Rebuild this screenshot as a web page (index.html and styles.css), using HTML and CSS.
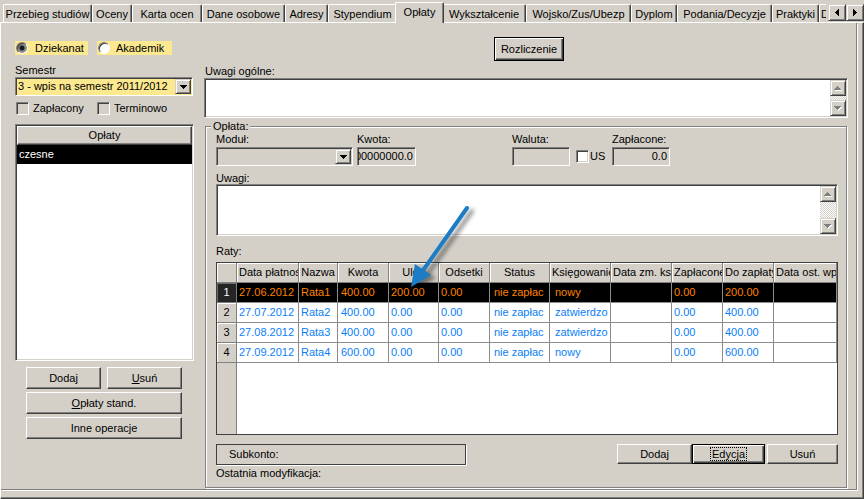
FILE: index.html
```html
<!DOCTYPE html>
<html lang="pl">
<head>
<meta charset="utf-8">
<title>Opłaty</title>
<link rel="stylesheet" href="styles.css">
</head>
<body>
<div class="tabstrip">
  <div class="tab">Przebieg studiów</div>
  <div class="tab">Oceny</div>
  <div class="tab">Karta ocen</div>
  <div class="tab">Dane osobowe</div>
  <div class="tab">Adresy</div>
  <div class="tab">Stypendium</div>
  <div class="tab active">Opłaty</div>
  <div class="tab">Wykształcenie</div>
  <div class="tab">Wojsko/Zus/Ubezp</div>
  <div class="tab">Dyplom</div>
  <div class="tab">Podania/Decyzje</div>
  <div class="tab">Praktyki</div>
  <div class="tab clip">D</div>
  <div class="spin">
    <span class="spinbtn"><svg class="px" width="4" height="7" viewBox="0 0 4 7"><path d="M3 0h1v7h-1v-1h-1v-1h-1v-1h-1v-1h1v-1h1v-1h1z"/></svg></span>
    <span class="spinbtn"><svg class="px" width="4" height="7" viewBox="0 0 4 7"><path d="M0 0h1v1h1v1h1v1h1v1h-1v1h-1v1h-1v1h-1z"/></svg></span>
  </div>
</div>

<div class="page">
  <div class="content">
    <div class="left">
      <div class="radios">
        <span class="radio hl r-dziek"><span class="rb on"></span>Dziekanat</span>
        <span class="radio hl r-akad"><span class="rb"></span>Akademik</span>
      </div>
      <div class="cap cap-sem">Semestr</div>
      <div class="combo sem">
        <span class="val">3 - wpis na semestr 2011/2012</span>
        <span class="dd"><svg class="px" width="7" height="4" viewBox="0 0 7 4"><path d="M0 0h7v1h-1v1h-1v1h-1v1h-1v-1h-1v-1h-1v-1h-1z"/></svg></span>
      </div>
      <div class="checks">
        <span class="chk chk-zapl"><span class="cb"></span>Zapłacony</span>
        <span class="chk"><span class="cb"></span>Terminowo</span>
      </div>
      <div class="list">
        <div class="list-head">Opłaty</div>
        <div class="list-row sel">czesne</div>
      </div>
      <div class="lbtns">
        <div class="lbtn-row">
          <button class="btn half">Dodaj</button>
          <button class="btn half"><u>U</u>suń</button>
        </div>
        <button class="btn full"><u>O</u>płaty stand.</button>
        <button class="btn full">Inne operacje</button>
      </div>
    </div>

    <div class="right">
      <button class="btn default rozl">Rozliczenie</button>
      <div class="cap cap-uwagi">Uwagi ogólne:</div>
      <div class="memo memo-ogolne">
        <div class="vscroll">
          <span class="sb"><svg class="px" width="8" height="5" viewBox="0 0 8 5"><path fill="#fff" transform="translate(1 1)" d="M3 0h1v1h1v1h1v1h1v1h-7v-1h1v-1h1v-1h1z"/><path fill="#808080" d="M3 0h1v1h1v1h1v1h1v1h-7v-1h1v-1h1v-1h1z"/></svg></span>
          <span class="track"></span>
          <span class="sb"><svg class="px" width="8" height="5" viewBox="0 0 8 5"><path fill="#fff" transform="translate(1 1)" d="M0 0h7v1h-1v1h-1v1h-1v1h-1v-1h-1v-1h-1v-1h-1z"/><path fill="#808080" d="M0 0h7v1h-1v1h-1v1h-1v1h-1v-1h-1v-1h-1v-1h-1z"/></svg></span>
        </div>
      </div>

      <fieldset class="group">
        <legend>Opłata:</legend>
        <div class="frow">
          <div class="fld f-modul">
            <div class="cap">Moduł:</div>
            <div class="combo gray">
              <span class="val"></span>
              <span class="dd"><svg class="px" width="7" height="4" viewBox="0 0 7 4"><path d="M0 0h7v1h-1v1h-1v1h-1v1h-1v-1h-1v-1h-1v-1h-1z"/></svg></span>
            </div>
          </div>
          <div class="fld f-kwota">
            <div class="cap">Kwota:</div>
            <div class="edit num"><span>00000000.0</span></div>
          </div>
          <div class="fld f-waluta">
            <div class="cap">Waluta:</div>
            <div class="edit"></div>
          </div>
          <div class="fld f-us">
            <div class="cap">&nbsp;</div>
            <div class="usrow"><span class="cb white"></span>US</div>
          </div>
          <div class="fld f-zapl">
            <div class="cap">Zapłacone:</div>
            <div class="edit num"><span>0.0</span></div>
          </div>
        </div>

        <div class="cap cap-uw2">Uwagi:</div>
        <div class="memo memo-uwagi">
          <div class="vscroll">
            <span class="sb"><svg class="px" width="8" height="5" viewBox="0 0 8 5"><path fill="#fff" transform="translate(1 1)" d="M3 0h1v1h1v1h1v1h1v1h-7v-1h1v-1h1v-1h1z"/><path fill="#808080" d="M3 0h1v1h1v1h1v1h1v1h-7v-1h1v-1h1v-1h1z"/></svg></span>
            <span class="track"></span>
            <span class="sb"><svg class="px" width="8" height="5" viewBox="0 0 8 5"><path fill="#fff" transform="translate(1 1)" d="M0 0h7v1h-1v1h-1v1h-1v1h-1v-1h-1v-1h-1v-1h-1z"/><path fill="#808080" d="M0 0h7v1h-1v1h-1v1h-1v1h-1v-1h-1v-1h-1v-1h-1z"/></svg></span>
          </div>
        </div>

        <div class="cap cap-raty">Raty:</div>
        <div class="grid">
          <table>
            <colgroup>
              <col class="c-rn"><col class="c-data"><col class="c-nazwa"><col class="c-kwota"><col class="c-ulga"><col class="c-ods"><col class="c-status"><col class="c-ks"><col class="c-dzm"><col class="c-zapl"><col class="c-do"><col class="c-dow">
            </colgroup>
            <thead>
              <tr><th class="rn"></th><th>Data płatności</th><th>Nazwa</th><th>Kwota</th><th>Ulga</th><th>Odsetki</th><th>Status</th><th>Księgowanie</th><th>Data zm. ks.</th><th>Zapłacone</th><th>Do zapłaty</th><th>Data ost. wpłaty</th></tr>
            </thead>
            <tbody>
              <tr class="sel"><td class="rn">1</td><td>27.06.2012</td><td>Rata1</td><td class="kw">400.00</td><td>200.00</td><td>0.00</td><td class="st">nie zapłac</td><td class="ks">nowy</td><td></td><td>0.00</td><td>200.00</td><td></td></tr>
              <tr><td class="rn">2</td><td>27.07.2012</td><td>Rata2</td><td class="kw">400.00</td><td>0.00</td><td>0.00</td><td class="st">nie zapłac</td><td class="ks">zatwierdzo</td><td></td><td>0.00</td><td>400.00</td><td></td></tr>
              <tr><td class="rn">3</td><td>27.08.2012</td><td>Rata3</td><td class="kw">400.00</td><td>0.00</td><td>0.00</td><td class="st">nie zapłac</td><td class="ks">zatwierdzo</td><td></td><td>0.00</td><td>400.00</td><td></td></tr>
              <tr><td class="rn">4</td><td>27.09.2012</td><td>Rata4</td><td class="kw">600.00</td><td>0.00</td><td>0.00</td><td class="st">nie zapłac</td><td class="ks">nowy</td><td></td><td>0.00</td><td>600.00</td><td></td></tr>
            </tbody>
          </table>
        </div>

        <div class="brow">
          <div class="subkonto">Subkonto:</div>
          <div class="bbtns">
            <button class="btn b-dodaj">Dodaj</button>
            <button class="btn default b-edycja"><span class="focus">Edycja</span></button>
            <button class="btn b-usun">Usuń</button>
          </div>
        </div>
        <div class="cap cap-mod">Ostatnia modyfikacja:</div>
      </fieldset>
    </div>
  </div>
</div>

<svg class="annot" width="864" height="499" viewBox="0 0 864 499">
  <defs>
    <filter id="shadow" x="-50%" y="-50%" width="200%" height="200%"><feGaussianBlur stdDeviation="2.2"/></filter>
  </defs>
  <g filter="url(#shadow)" opacity="0.45" transform="translate(5 3)">
    <line x1="467" y1="208" x2="424" y2="269" stroke="#000" stroke-width="4" stroke-linecap="round"/>
    <polygon points="411,287 431,275 415,264" fill="#000"/>
  </g>
  <line x1="467" y1="208" x2="424" y2="269" stroke="#1c7dc6" stroke-width="4" stroke-linecap="round"/>
  <polygon points="411,287 431,275 415,264" fill="#1c7dc6"/>
</svg>
</body>
</html>
```

FILE: styles.css
```css
* { box-sizing: border-box; margin: 0; padding: 0; }
html, body { width: 864px; height: 499px; overflow: hidden; }
body {
  position: relative;
  background: #d4d0c8;
  color: #000;
  font: 11px/13px "Liberation Sans", Arial, sans-serif;
}
button { font: inherit; color: inherit; background: #d4d0c8; cursor: default; }
svg.px { display: block; shape-rendering: crispEdges; }
u { text-decoration: underline; }

/* ---------- tab strip ---------- */
.tabstrip { display: flex; align-items: flex-end; height: 22px; padding-left: 3px; }
.tab {
  flex: none;
  height: 18px;
  padding-top: 2px;
  line-height: 15px;
  text-align: center;
  white-space: nowrap;
  overflow: hidden;
  border-top: 1px solid #fff;
  border-left: 1px solid #fff;
  border-right: 1px solid #404040;
  box-shadow: inset -1px 0 #808080;
  border-top-left-radius: 2px;
  border-top-right-radius: 2px;
}
.tab:nth-child(1) { width: 89px; }
.tab:nth-child(2) { width: 40px; }
.tab:nth-child(3) { width: 70px; }
.tab:nth-child(4) { width: 83px; }
.tab:nth-child(5) { width: 43px; }
.tab:nth-child(6) { width: 69px; }
.tab:nth-child(8) { width: 84px; }
.tab:nth-child(9) { width: 105px; }
.tab:nth-child(10) { width: 46px; }
.tab:nth-child(11) { width: 95px; }
.tab:nth-child(12) { width: 47px; }
.tab.active {
  width: 49px;
  height: 21px;
  margin: 0 -2px -1px;
  background: #d4d0c8;
  position: relative;
  z-index: 1;
}
.tab.clip {
  width: 7px;
  text-align: left;
  padding-left: 1px;
  border-right: 0;
  box-shadow: none;
  border-top-right-radius: 0;
}
.spin { flex: none; width: 38px; display: flex; align-self: flex-start; margin-top: 4px; padding-left: 2px; }
.spinbtn {
  width: 18px; height: 17px;
  display: flex; align-items: center; justify-content: center;
  border: 1px solid; border-color: #d4d0c8 #404040 #404040 #d4d0c8;
  box-shadow: inset 1px 1px #fff, inset -1px -1px #808080;
  background: #d4d0c8;
}

/* ---------- page ---------- */
.page {
  height: 477px;
  border: 1px solid;
  border-color: #fff #404040 #404040 #fff;
  box-shadow: inset -1px -1px #808080;
}
.content {
  display: flex;
  width: 856px;
  height: 467px;
  border-right: 1px solid #808080;
  border-bottom: 1px solid #808080;
  box-shadow: 1px 1px #fff;
}

/* bevels */
.btn {
  display: block;
  padding: 0;
  text-align: center;
  border: 1px solid;
  border-color: #fff #404040 #404040 #fff;
  box-shadow: inset -1px -1px #808080;
  background: #d4d0c8;
}
.btn.default {
  border-color: #000;
  box-shadow: inset 1px 1px #fff, inset -1px -1px #404040, inset -2px -2px #808080;
}
.cap { line-height: 13px; white-space: nowrap; }

/* ---------- left column ---------- */
.left { flex: none; width: 203px; padding: 18px 0 0 14px; }
.radios { display: flex; height: 14px; }
.radio { display: flex; align-items: center; height: 14px; padding-left: 1px; white-space: nowrap; }
.hl { background: #fbe88f; }
.r-dziek { width: 73px; gap: 7px; }
.r-akad { width: 75px; gap: 6px; margin-left: 9px; }
.rb {
  flex: none;
  width: 12px; height: 12px;
  border-radius: 50%;
  border: 1px solid; border-color: #808080 #fff #fff #808080;
  box-shadow: inset 1px 1px #404040;
  background: #fff;
}
.rb.on { background: radial-gradient(circle, #1a1a1a 0 2px, #8c8c8c 3px 100%); }

.cap-sem { margin-top: 9px; }
.combo {
  display: flex;
  height: 19px;
  padding: 1px;
  border: 1px solid; border-color: #808080 #fff #fff #808080;
  box-shadow: inset 1px 1px #404040;
  background: #d4d0c8;
}
.combo.sem { width: 178px; background: #fbe88f; }
.combo .val { flex: 1; padding-left: 1px; line-height: 15px; white-space: nowrap; overflow: hidden; }
.dd {
  flex: none;
  width: 16px;
  display: flex; align-items: center; justify-content: center;
  border: 1px solid; border-color: #d4d0c8 #404040 #404040 #d4d0c8;
  box-shadow: inset 1px 1px #fff, inset -1px -1px #808080;
  background: #d4d0c8;
}
.checks { display: flex; margin-top: 6px; height: 13px; padding-left: 1px; }
.chk { display: flex; align-items: center; gap: 4px; line-height: 13px; }
.chk-zapl { width: 81px; }
.cb {
  flex: none;
  width: 13px; height: 13px;
  border: 1px solid; border-color: #808080 #fff #fff #808080;
  box-shadow: inset 1px 1px #404040, inset -1px -1px #d4d0c8;
  background: #d4d0c8;
}
.cb.white { background: #fff; }

.list {
  margin-top: 9px;
  width: 179px; height: 237px;
  padding: 1px;
  border: 1px solid; border-color: #808080 #fff #fff #808080;
  box-shadow: inset 1px 1px #404040, inset -1px -1px #d4d0c8;
  background: #fff;
}
.list-head {
  height: 19px; line-height: 17px; text-align: center;
  background: #d4d0c8;
  border: 1px solid; border-color: #fff #404040 #404040 #fff;
  box-shadow: inset -1px -1px #808080;
}
.list-row { height: 19px; line-height: 19px; padding-left: 2px; }
.list-row.sel { background: #000; color: #fff; }

.lbtns { margin: 6px 0 0 11px; }
.lbtn-row { display: flex; gap: 6px; }
.btn.half { width: 75px; height: 22px; }
.btn.full { width: 156px; height: 22px; margin-top: 3px; }

/* ---------- right column ---------- */
.right { flex: 1; min-width: 0; padding-right: 8px; }
.rozl { width: 70px; height: 24px; margin: 14px 0 0 290px; }
.cap-uwagi { margin-top: 4px; padding-left: 1px; }

.memo {
  display: flex; justify-content: flex-end;
  padding: 1px;
  border: 1px solid; border-color: #808080 #fff #fff #808080;
  box-shadow: inset 1px 1px #404040, inset -1px -1px #d4d0c8;
  background: #fff;
}
.memo-ogolne { width: 644px; height: 40px; }
.memo-uwagi { height: 52px; }
.vscroll { width: 16px; display: flex; flex-direction: column; }
.sb {
  flex: none; height: 16px;
  display: flex; align-items: center; justify-content: center;
  border: 1px solid; border-color: #d4d0c8 #404040 #404040 #d4d0c8;
  box-shadow: inset 1px 1px #fff, inset -1px -1px #808080;
  background: #d4d0c8;
}
.track { flex: 1; background: repeating-conic-gradient(#fff 0 25%, #d4d0c8 0 50%) 0 0 / 2px 2px; }

.group {
  margin: 2px 0 0 1px;
  width: 642px; height: 368px;
  min-width: 0;
  padding: 0 8px 0 10px;
  border: 1px solid #808080;
  box-shadow: inset 1px 1px #fff, 1px 1px #fff;
}
.group legend { margin-left: -5px; padding: 0 2px; line-height: 13px; background: #d4d0c8; }

.frow { display: flex; }
.fld .cap { height: 13px; }
.fld > .combo, .fld > .edit, .fld > .usrow { margin-top: 1px; }
.f-modul { width: 137px; }
.f-modul .combo { width: 137px; }
.f-kwota { width: 59px; margin-left: 4px; }
.f-waluta { width: 58px; margin-left: 96px; }
.f-us { width: 36px; margin-left: 6px; }
.f-zapl { width: 58px; }
.edit {
  display: flex; justify-content: flex-end; align-items: center;
  height: 19px;
  padding: 0 2px;
  overflow: hidden;
  white-space: nowrap;
  border: 1px solid; border-color: #808080 #fff #fff #808080;
  box-shadow: inset 1px 1px #404040;
  background: #d4d0c8;
}
.edit span { flex: none; }
.usrow { display: flex; align-items: center; gap: 1px; height: 19px; }

.cap-uw2 { margin-top: 6px; line-height: 12px; }
.cap-raty { margin-top: 9px; }

.grid {
  margin-top: 4px;
  height: 173px;
  border: 1px solid #404040;
  overflow: hidden;
  background: linear-gradient(90deg, #d4d0c8 0 19px, #808080 19px 20px, #fff 20px);
}
.grid table { width: 620px; table-layout: fixed; border-collapse: separate; border-spacing: 0; }
.c-rn { width: 20px; }
.c-data { width: 62px; }
.c-nazwa { width: 39px; }
.c-kwota { width: 51px; }
.c-ulga { width: 50px; }
.c-ods { width: 51px; }
.c-status { width: 60px; }
.c-ks { width: 61px; }
.c-dzm { width: 61px; }
.c-zapl { width: 51px; }
.c-do { width: 51px; }
.c-dow { width: 63px; }
.grid th, .grid td {
  height: 20px;
  padding: 0 0 0 2px;
  line-height: 19px;
  white-space: nowrap;
  overflow: hidden;
  text-align: left;
  font-weight: normal;
  border-right: 1px solid #8c8c8c;
  border-bottom: 1px solid #8c8c8c;
}
.grid th {
  text-align: center;
  padding: 0 2px;
  background: #d4d0c8;
  border-color: #808080;
  box-shadow: inset 1px 1px #fff;
}
.grid td { background: #fff; color: #0a80f5; }
.grid td.rn {
  padding: 0;
  text-align: center;
  color: #000;
  background: #d4d0c8;
  border-color: #808080;
  box-shadow: inset 1px 1px #fff;
}
.grid td.kw { padding-left: 3px; }
.grid td.st { padding-left: 4px; }
.grid td.ks { padding-left: 5px; }
.grid tr.sel td { background: #000; color: #ff8000; }
.grid tr.sel td.rn { background: #252525; color: #fff; box-shadow: inset 1px 1px #6a6a6a; }

.brow { display: flex; margin-top: 9px; }
.subkonto {
  width: 250px; height: 21px;
  padding-left: 12px;
  line-height: 19px;
  border: 1px solid #404040;
  box-shadow: 1px 1px #fff;
}
.bbtns { display: flex; margin-left: auto; }
.bbtns .btn { height: 20px; }
.b-dodaj { width: 75px; }
.b-edycja { width: 73px; }
.b-usun { width: 71px; margin-left: 2px; }
.focus { outline: 1px dotted #000; outline-offset: 0; padding: 0 1px; }
.cap-mod { margin-top: 2px; }

/* annotation arrow overlay */
.annot { position: absolute; left: 0; top: 0; pointer-events: none; }
```
